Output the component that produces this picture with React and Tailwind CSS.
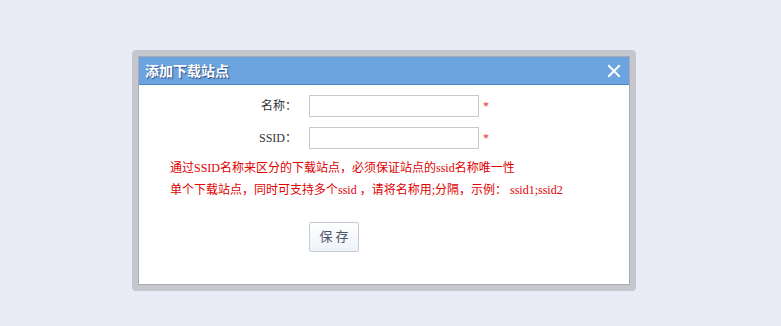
// 添加下载站点 弹窗

import { useState } from 'react';

function CloseIcon() {
  return (
    <svg width="14" height="14" viewBox="0 0 14 14" className="block">
      <path d="M2 2 L12 12 M12 2 L2 12" stroke="#fff" strokeWidth="2" strokeLinecap="square" />
    </svg>
  );
}

export default function App() {
  const [name, setName] = useState('');
  const [ssid, setSsid] = useState('');

  const font = "font-['Liberation_Serif','Noto_Sans_CJK_SC',serif]";

  return (
    <div className={`w-[781px] h-[326px] bg-[#e9ecf7] pl-[132px] pt-[50px] ${font}`}>
      {/* 外框 */}
      <div className="w-[504px] h-[241px] p-[6px] bg-[#c6c7cd] rounded-[4px]">
        <div className="h-full flex flex-col bg-white border border-[#a9abb1]">
          {/* 标题栏 */}
          <div className="h-[28px] shrink-0 flex items-center justify-between bg-[#6ca4e0] border-b border-[#4f86c6] pl-[6px] pr-[8px]">
            <span className="text-white text-[14px] font-bold font-['Noto_Sans_CJK_SC',sans-serif] [text-shadow:1px_1px_1px_#2b4f80]">
              添加下载站点
            </span>
            <button className="p-0 bg-transparent">
              <CloseIcon />
            </button>
          </div>

          {/* 表单 */}
          <div className="flex flex-col pt-[10px]">
            <div className="flex items-center h-[22px]">
              <label className="w-[160px] text-right text-[12px] text-[#333] pr-[2px]">名称：</label>
              <input
                type="text"
                value={name}
                onChange={(e) => setName(e.target.value)}
                className="ml-[10px] w-[170px] h-[22px] border border-[#c9c9c9] outline-none px-1 text-[12px]"
              />
              <span className="ml-[4px] text-[#e03030] text-[12px]">*</span>
            </div>
            <div className="flex items-center h-[22px] mt-[10px]">
              <label className="w-[160px] text-right text-[12px] text-[#333] pr-[2px]">SSID：</label>
              <input
                type="text"
                value={ssid}
                onChange={(e) => setSsid(e.target.value)}
                className="ml-[10px] w-[170px] h-[22px] border border-[#c9c9c9] outline-none px-1 text-[12px]"
              />
              <span className="ml-[4px] text-[#e03030] text-[12px]">*</span>
            </div>

            {/* 提示 */}
            <div className="mt-[8px] pl-[31px] text-[#e00000] text-[12px] leading-[22px]">
              <p>通过SSID名称来区分的下载站点，必须保证站点的ssid名称唯一性</p>
              <p>单个下载站点，同时可支持多个ssid ，请将名称用;分隔，示例： ssid1;ssid2</p>
            </div>

            <div className="pl-[170px] mt-[21px]">
              <button className="w-[50px] h-[30px] border border-[#c3cbd6] rounded-[2px] bg-gradient-to-b from-white to-[#eef3f8] text-[13px] text-[#4d5468] tracking-[3px] pl-[3px]">
                保存
              </button>
            </div>
          </div>
        </div>
      </div>
    </div>
  );
}
